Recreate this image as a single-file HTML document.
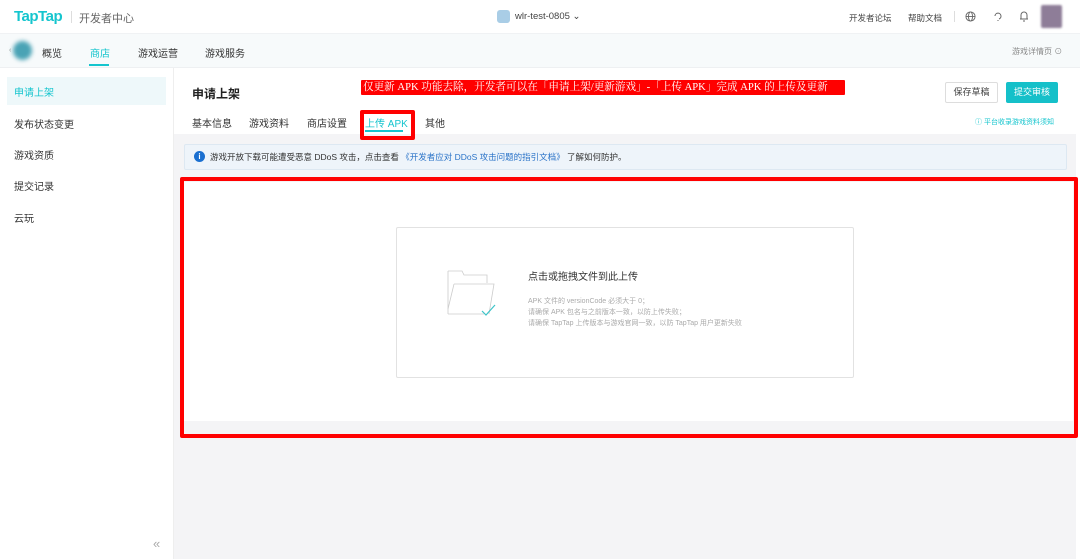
<!DOCTYPE html>
<html><head><meta charset="utf-8"><style>
*{margin:0;padding:0;box-sizing:border-box}
body{width:1080px;height:559px;overflow:hidden;background:#fff;font-family:"Liberation Sans","Noto Sans CJK SC",sans-serif;color:#333;position:relative}
.a{position:absolute;white-space:nowrap}
</style></head><body>
<div class="a" style="left:0;top:0;width:1080px;height:34px;background:#fff;border-bottom:1px solid #f0f2f4"></div>
<div class="a" style="left:14px;top:8px;font-size:15px;font-weight:bold;color:#15c5ce;letter-spacing:-0.5px">TapTap</div>
<div class="a" style="left:71px;top:11px;width:1px;height:12px;background:#ddd"></div>
<div class="a" style="left:79px;top:10px;font-size:11px;color:#666">开发者中心</div>
<div class="a" style="left:497px;top:10px;width:13px;height:13px;border-radius:3px;background:#a9cde6"></div>
<div class="a" style="left:515px;top:11px;font-size:9.5px;color:#444">wlr-test-0805 ⌄</div>
<div class="a" style="left:849px;top:12px;font-size:8.5px;color:#444">开发者论坛</div>
<div class="a" style="left:908px;top:12px;font-size:8.5px;color:#444">帮助文档</div>
<div class="a" style="left:954px;top:11px;width:1px;height:11px;background:#ddd"></div>
<svg class="a" style="left:965px;top:11px" width="11" height="11" viewBox="0 0 12 12" fill="none" stroke="#666" stroke-width="1"><circle cx="6" cy="6" r="5"/><ellipse cx="6" cy="6" rx="2.2" ry="5"/><path d="M1 6h10"/></svg>
<svg class="a" style="left:993px;top:11px" width="10" height="11" viewBox="0 0 10 11" fill="none" stroke="#666" stroke-width="1"><path d="M2 5a3 3 0 1 1 4 3M5 9v1"/></svg>
<svg class="a" style="left:1019px;top:10px" width="10" height="12" viewBox="0 0 10 12" fill="none" stroke="#666" stroke-width="1"><path d="M2 9V5a3 3 0 0 1 6 0v4H1h8M4 11h2"/></svg>
<div class="a" style="left:1041px;top:5px;width:21px;height:23px;background:#8e7d98;filter:blur(1px);border-radius:2px"></div>
<div class="a" style="left:0;top:34px;width:1080px;height:34px;background:#f7fafb;border-bottom:1px solid #eef0f2"></div>
<div class="a" style="left:9px;top:47px;font-size:7px;color:#999">‹</div>
<div class="a" style="left:13px;top:41px;width:19px;height:19px;border-radius:50%;background:#4aa3b5;filter:blur(2px)"></div>
<div class="a" style="left:42px;top:45px;font-size:10px;color:#333">概览</div>
<div class="a" style="left:90px;top:45px;font-size:10px;color:#15c5ce">商店</div>
<div class="a" style="left:89px;top:64px;width:20px;height:2px;background:#15c5ce"></div>
<div class="a" style="left:138px;top:45px;font-size:10px;color:#333">游戏运营</div>
<div class="a" style="left:205px;top:45px;font-size:10px;color:#333">游戏服务</div>
<div class="a" style="left:1012px;top:46px;font-size:8px;color:#888">游戏详情页 ⊙</div>
<div class="a" style="left:173px;top:68px;width:1px;height:491px;background:#eee"></div>
<div class="a" style="left:7px;top:77px;width:159px;height:28px;background:#eef8fa"></div>
<div class="a" style="left:14px;top:84px;font-size:10px;color:#15c5ce">申请上架</div>
<div class="a" style="left:14px;top:116px;font-size:10px">发布状态变更</div>
<div class="a" style="left:14px;top:147px;font-size:10px">游戏资质</div>
<div class="a" style="left:14px;top:178px;font-size:10px">提交记录</div>
<div class="a" style="left:14px;top:210px;font-size:10px">云玩</div>
<div class="a" style="left:153px;top:536px;font-size:13px;color:#aaa">«</div>
<div class="a" style="left:174px;top:68px;width:906px;height:491px;background:#f4f4f6"></div>
<div class="a" style="left:174px;top:68px;width:906px;height:66px;background:#fff"></div>
<div class="a" style="left:1076px;top:134px;width:4px;height:425px;background:#fff"></div>
<div class="a" style="left:192px;top:85px;font-size:12px;font-weight:bold;color:#222">申请上架</div>
<div class="a" style="left:361px;top:80px;width:484px;height:15px;background:#f00;border-radius:1px"></div>
<div class="a" style="left:363px;top:80px;font-size:10.6px;line-height:15px;color:#fff;font-family:'Liberation Serif','Noto Serif CJK SC',serif">仅更新 APK 功能去除，开发者可以在「申请上架/更新游戏」-「上传 APK」完成 APK 的上传及更新</div>
<div class="a" style="left:945px;top:82px;width:53px;height:21px;border:1px solid #ddd;border-radius:2px;font-size:9px;color:#444;text-align:center;line-height:19px">保存草稿</div>
<div class="a" style="left:1006px;top:82px;width:52px;height:21px;background:#15c0c9;border-radius:2px;font-size:9px;color:#fff;text-align:center;line-height:21px">提交审核</div>
<div class="a" style="left:975px;top:117px;font-size:7px;color:#15c5ce">ⓘ 平台收录游戏资料须知</div>
<div class="a" style="left:192px;top:115px;font-size:10px">基本信息</div>
<div class="a" style="left:249px;top:115px;font-size:10px">游戏资料</div>
<div class="a" style="left:307px;top:115px;font-size:10px">商店设置</div>
<div class="a" style="left:365px;top:115px;font-size:10px;color:#15c5ce">上传 APK</div>
<div class="a" style="left:365px;top:130px;width:38px;height:2px;background:#15c5ce"></div>
<div class="a" style="left:425px;top:115px;font-size:10px">其他</div>
<div class="a" style="left:360px;top:110px;width:55px;height:30px;border:4px solid #f00;border-radius:2px"></div>
<div class="a" style="left:184px;top:144px;width:883px;height:26px;background:#eef4fa;border:1px solid #dde8f2;border-radius:2px"></div>
<div class="a" style="left:194px;top:151px;width:11px;height:11px;border-radius:50%;background:#1a6fd0;color:#fff;font-size:8px;text-align:center;line-height:11px;font-weight:bold">i</div>
<div class="a" style="left:210px;top:151px;font-size:8.5px;color:#333">游戏开放下载可能遭受恶意 DDoS 攻击，点击查看 <span style="color:#2a73c8">《开发者应对 DDoS 攻击问题的指引文档》</span> 了解如何防护。</div>
<div class="a" style="left:184px;top:182px;width:889px;height:239px;background:#fff"></div>
<div class="a" style="left:396px;top:227px;width:458px;height:151px;border:1px solid #e2e2e2;border-radius:2px;background:#fff"></div>
<svg class="a" style="left:446px;top:269px" width="54" height="50" viewBox="0 0 54 50" fill="none" stroke="#ccc" stroke-width="0.8"><path d="M2 2h14l2 4h23v8"/><path d="M2 2v43"/><path d="M2 45h36"/><path d="M8 15h40l-5 30"/><path d="M8 15L2 40"/><path d="M36 42l4 4 9-10" stroke="#3cc3c8" stroke-width="1.2"/></svg>
<div class="a" style="left:528px;top:268px;font-size:10px;color:#333">点击或拖拽文件到此上传</div>
<div class="a" style="left:528px;top:296px;font-size:7px;color:#aaa;line-height:11px">APK 文件的 versionCode 必须大于 0；<br>请确保 APK 包名与之前版本一致，以防上传失败；<br>请确保 TapTap 上传版本与游戏官网一致，以防 TapTap 用户更新失败</div>
<div class="a" style="left:180px;top:177px;width:898px;height:261px;border:4px solid #f00;border-radius:2px"></div>
</body></html>
